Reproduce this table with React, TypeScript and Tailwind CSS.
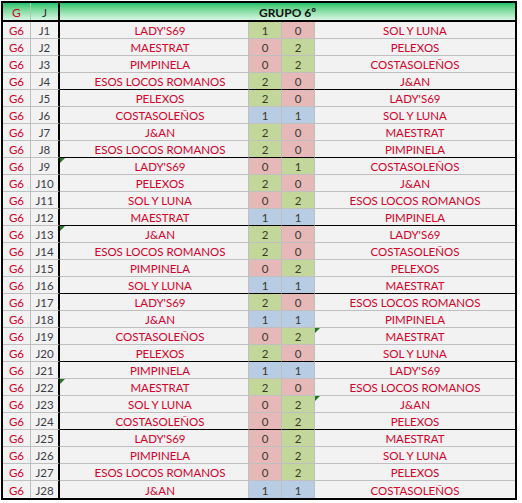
import React from "react";

type Row = { h: string; a: string; s1: number; s2: number; triH?: boolean; triA?: boolean };

const rows: Row[] = [
  { h: "LADY'S69", s1: 1, s2: 0, a: "SOL Y LUNA" },
  { h: "MAESTRAT", s1: 0, s2: 2, a: "PELEXOS" },
  { h: "PIMPINELA", s1: 0, s2: 2, a: "COSTASOLEÑOS" },
  { h: "ESOS LOCOS ROMANOS", s1: 2, s2: 0, a: "J&AN" },
  { h: "PELEXOS", s1: 2, s2: 0, a: "LADY'S69" },
  { h: "COSTASOLEÑOS", s1: 1, s2: 1, a: "SOL Y LUNA" },
  { h: "J&AN", s1: 2, s2: 0, a: "MAESTRAT" },
  { h: "ESOS LOCOS ROMANOS", s1: 2, s2: 0, a: "PIMPINELA" },
  { h: "LADY'S69", s1: 0, s2: 1, a: "COSTASOLEÑOS", triH: true },
  { h: "PELEXOS", s1: 2, s2: 0, a: "J&AN" },
  { h: "SOL Y LUNA", s1: 0, s2: 2, a: "ESOS LOCOS ROMANOS" },
  { h: "MAESTRAT", s1: 1, s2: 1, a: "PIMPINELA" },
  { h: "J&AN", s1: 2, s2: 0, a: "LADY'S69", triH: true },
  { h: "ESOS LOCOS ROMANOS", s1: 2, s2: 0, a: "COSTASOLEÑOS" },
  { h: "PIMPINELA", s1: 0, s2: 2, a: "PELEXOS" },
  { h: "SOL Y LUNA", s1: 1, s2: 1, a: "MAESTRAT" },
  { h: "LADY'S69", s1: 2, s2: 0, a: "ESOS LOCOS ROMANOS" },
  { h: "J&AN", s1: 1, s2: 1, a: "PIMPINELA" },
  { h: "COSTASOLEÑOS", s1: 0, s2: 2, a: "MAESTRAT", triA: true },
  { h: "PELEXOS", s1: 2, s2: 0, a: "SOL Y LUNA" },
  { h: "PIMPINELA", s1: 1, s2: 1, a: "LADY'S69" },
  { h: "MAESTRAT", s1: 2, s2: 0, a: "ESOS LOCOS ROMANOS", triH: true },
  { h: "SOL Y LUNA", s1: 0, s2: 2, a: "J&AN", triA: true },
  { h: "COSTASOLEÑOS", s1: 0, s2: 2, a: "PELEXOS" },
  { h: "LADY'S69", s1: 0, s2: 2, a: "MAESTRAT" },
  { h: "PIMPINELA", s1: 0, s2: 2, a: "SOL Y LUNA" },
  { h: "ESOS LOCOS ROMANOS", s1: 0, s2: 2, a: "PELEXOS" },
  { h: "J&AN", s1: 1, s2: 1, a: "COSTASOLEÑOS" },
];

function scoreBg(me: number, other: number) {
  if (me > other) return "bg-[#c4d79b]";
  if (me < other) return "bg-[#e6b8b7]";
  return "bg-[#b8cce4]";
}

function Tri() {
  return (
    <span className="absolute left-0 top-0 w-0 h-0 border-t-[5px] border-t-[#1e7b1e] border-r-[5px] border-r-transparent" />
  );
}

export default function App() {
  return (
    <div className="w-[522px] h-[503px] bg-white pt-[1px] pl-[1px]" style={{ fontFamily: "Lato, 'Noto Sans', sans-serif" }}>
      <div className="w-[516px] border-2 border-black bg-[#f2f2f2] text-[11.5px] leading-none">
        <div className="grid grid-cols-[28px_29px_1fr] h-[19px] border-b-2 border-black bg-gradient-to-b from-[#14c46c] to-[#d6f6e4]">
          <div className="flex items-center justify-center pt-[2px] border-r border-[#a8c8b4] text-[#d4002a] text-[12px]">G</div>
          <div className="flex items-center justify-center pt-[2px] border-r-2 border-black text-[#1f3a30] text-[12px]">J</div>
          <div className="flex items-center justify-center pt-[2px] font-bold text-[#111] text-[12px]">GRUPO 6º</div>
        </div>
        {rows.map((r, i) => {
          const n = i + 1;
          const last = n === rows.length;
          const group = n % 4 === 0 && !last;
          const lineTeam = last ? "" : group ? "border-b border-b-black" : "border-b border-b-[#bfbfbf]";
          const lineGJ = last ? "" : "border-b border-b-[#bfbfbf]";
          return (
            <div key={n} className="grid grid-cols-[28px_29px_189px_33px_33px_1fr] h-[17px]">
              <div className={`flex items-center justify-center pt-[2px] border-r border-r-[#bfbfbf] text-[#d4002a] ${lineGJ}`}>G6</div>
              <div className={`flex items-center justify-center pt-[2px] border-r-2 border-r-black text-[#3c3c48] ${lineGJ}`}>J{n}</div>
              <div className={`relative flex items-center justify-center pt-[2px] pl-[12px] border-r border-r-[#bfbfbf] text-[#d4002a] ${lineTeam}`}>
                {r.triH && <Tri />}
                {r.h}
              </div>
              <div className={`flex items-center justify-center pt-[2px] border-r border-r-[#bfbfbf] text-[#3a3a2a] ${scoreBg(r.s1, r.s2)} ${lineTeam}`}>{r.s1}</div>
              <div className={`flex items-center justify-center pt-[2px] border-r border-r-[#bfbfbf] text-[#3a3a2a] ${scoreBg(r.s2, r.s1)} ${lineTeam}`}>{r.s2}</div>
              <div className={`relative flex items-center justify-center pt-[2px] text-[#d4002a] ${lineTeam}`}>
                {r.triA && <Tri />}
                {r.a}
              </div>
            </div>
          );
        })}
      </div>
    </div>
  );
}
